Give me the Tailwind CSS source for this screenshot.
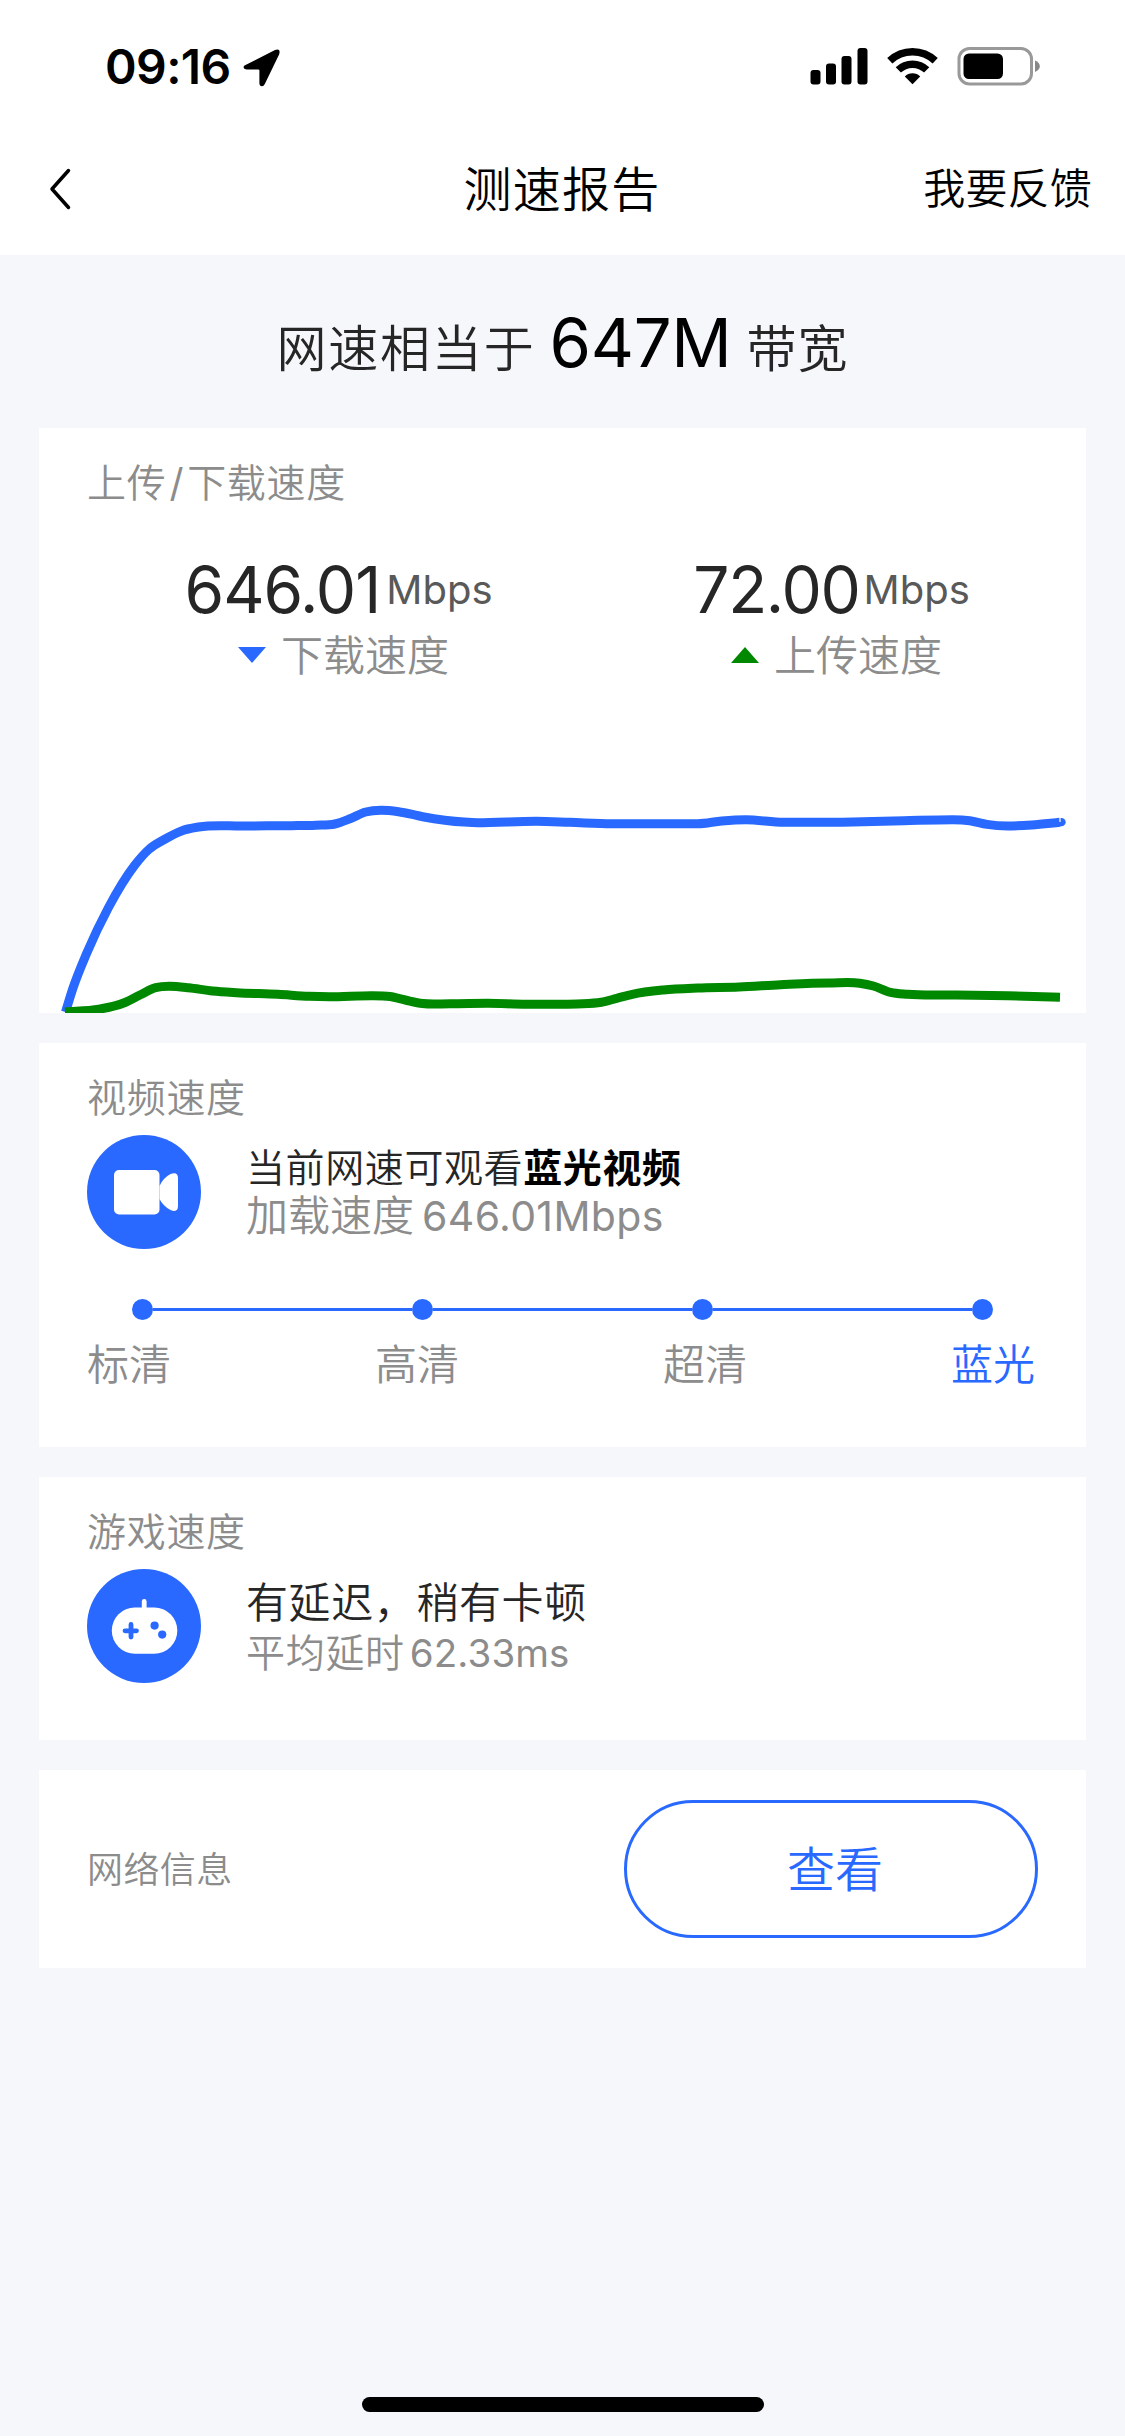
<!DOCTYPE html>
<html lang="zh-CN">
<head>
<meta charset="utf-8">
<title>测速报告</title>
<script src="https://cdn.jsdelivr.net/npm/@tailwindcss/browser@4"></script>
</head>
<body class="w-[1125px] h-[2436px] overflow-hidden bg-[#f5f7fb] font-['Noto_Sans_CJK_SC',sans-serif] font-[350] text-[#262626] flex flex-col">

<header class="bg-white h-[255px] flex-none">
  <div class="h-[132px] flex justify-between pl-[105px] pr-[84px]">
    <div class="flex pt-[37px] gap-[12px]">
      <span class="font-['Inter',sans-serif] font-semibold text-[48px] leading-[60px] tracking-[-0.6px] text-black w-[126px] whitespace-nowrap">09:16</span>
      <svg class="mt-[11px] w-[38px] h-[39px]" viewBox="0 0 38 39"><path d="M2 17.2 L32 2 Q38 0 36.200 6.200 L21.800 36 Q20.600 38.600 18.600 38.300 Q16.400 38 16.400 35.500 V22.500 Q16.400 21.500 15.400 21.500 H4 Q1 21.500 .6 19.500 Q.4 18 2 17.200Z"/></svg>
    </div>
    <svg class="mt-[46px] w-[231px] h-[40px]" viewBox="0 0 231 40">
      <rect x="0.500" y="24" width="10" height="14.500" rx="3"/>
      <rect x="16" y="17.500" width="10" height="21" rx="3"/>
      <rect x="31.500" y="10" width="10" height="28.500" rx="3"/>
      <rect x="47.500" y="2" width="10" height="36.500" rx="3"/>
      <g fill="none" stroke="#000" stroke-width="7.500">
        <path d="M79.800 14.800 A33 33 0 0 1 125.200 14.800"/>
        <path d="M88.300 23.900 A20.500 20.500 0 0 1 116.700 23.900"/>
      </g>
      <path d="M94.800 30.500 A11 11 0 0 1 110.200 30.500 L102.500 38.300Z"/>
      <rect x="149" y="2.500" width="72.500" height="35.500" rx="10.500" fill="none" stroke="#999" stroke-width="3"/>
      <rect x="153.500" y="7.500" width="39.500" height="25.500" rx="5.500"/>
      <path d="M225 14.500 Q229.800 16.500 229.800 20.300 Q229.800 24 225 26Z" fill="#888"/>
    </svg>
  </div>
  <div class="h-[120px] grid grid-cols-[1fr_auto_1fr] items-center pl-[48px] pr-[33px] text-black">
    <svg class="w-[24px] h-[44px] -mt-[7px]" viewBox="0 0 24 44" fill="none" stroke="#000" stroke-width="3.500" stroke-linecap="round" stroke-linejoin="round"><path d="M20.500 3.500 L4 22 L20.500 40.500"/></svg>
    <h1 class="text-[48px] leading-[60px] tracking-[1.3px] -mt-[12px] -translate-x-[8px]">测速报告</h1>
    <span class="justify-self-end text-[42px] leading-[60px] tracking-[0.2px] -mt-[12px]">我要反馈</span>
  </div>
</header>

<main class="px-[39px] flex flex-col">
  <div class="h-[173px] flex justify-center items-baseline pt-[48px] text-[50px] leading-[80px] tracking-[1.800px]">
    <span>网速相当于</span>
    <span class="font-['Inter',sans-serif] font-normal text-[67px] tracking-[-0.300px] text-black ml-[14px] mr-[15px]">647M</span>
    <span class="tracking-[1px]">带宽</span>
  </div>

  <section class="bg-white h-[585px] flex flex-col overflow-hidden">
    <h2 class="pl-[48px] mt-[28px] h-[48px] text-[39px] leading-[48px] tracking-[0.700px] text-[#8c8c8c]">上传<span class="mx-[3px] font-['Inter',sans-serif] font-normal">/</span>下载速度</h2>
    <div class="flex mt-[51px] pl-[53px]">
      <div class="w-[493px] flex flex-col items-center">
        <div class="flex items-center font-['Inter',sans-serif] font-normal leading-[70px]"><span class="text-[64px] tracking-[-1px]">646.01</span><span class="ml-[6px] text-[40px] text-[#595959]">Mbps</span></div>
        <div class="ml-[10px] flex items-center gap-[15px] text-[42px] leading-[56px] text-[#8c8c8c]"><svg class="mt-[4px] w-[28px] h-[16px]" viewBox="0 0 28 16"><path d="M0 0H28L14 16Z" fill="#2969ff"/></svg>下载速度</div>
      </div>
      <div class="w-[493px] flex flex-col items-center">
        <div class="flex items-center font-['Inter',sans-serif] font-normal leading-[70px]"><span class="text-[64px] tracking-[-1.300px]">72.00</span><span class="ml-[4px] text-[40px] text-[#595959]">Mbps</span></div>
        <div class="ml-[10px] flex items-center gap-[15px] text-[42px] leading-[56px] text-[#8c8c8c]"><svg class="mt-[4px] w-[28px] h-[16px]" viewBox="0 0 28 16"><path d="M0 16H28L14 0Z" fill="#080"/></svg>上传速度</div>
      </div>
    </div>
    <svg class="mt-auto w-[1047px] h-[233px] flex-none" viewBox="39 780 1047 233" fill="none" stroke-width="9">
      <path id="down" stroke="#2969ff"/>
      <path d="M1059.500 818 H1061.500 A4 4 0 0 1 1061.500 826.300 H1059.500Z" fill="#2969ff"/>
      <path d="M1060 818 V822" stroke="#fff" stroke-width="1.200"/>
      <path id="up" stroke="#080"/>
    </svg>
  </section>

  <section class="bg-white h-[404px] mt-[30px] px-[48px]">
    <h2 class="pt-[28px] h-[92px] text-[39px] leading-[48px] tracking-[0.700px] text-[#8c8c8c]">视频速度</h2>
    <div class="flex gap-[45px]">
      <svg class="w-[114px] h-[114px]" viewBox="0 0 114 114"><circle cx="57" cy="57" r="57" fill="#2969ff"/><rect x="27" y="35" width="45.500" height="44.500" rx="5" fill="#fff"/><path d="M72.500 51 Q76 43 83.500 39 Q91 36.500 91 43 V71 Q91 78 83.500 75 Q76 71 72.500 64Z" fill="#fff"/></svg>
      <div class="pt-[6px]">
        <p class="text-[39px] leading-[48px] tracking-[0.600px]">当前网速可观看<b class="font-bold text-black">蓝光视频</b></p>
        <p class="flex items-baseline text-[42px] leading-[48px] text-[#8c8c8c]">加载速度<span class="ml-[8px] font-['Inter',sans-serif] font-normal text-[41px] tracking-[0.350px]">646.01Mbps</span></p>
      </div>
    </div>
    <div class="mt-[50px] ml-[45px] w-[861px] h-[21px] flex items-center">
      <i class="size-[21px] rounded-full bg-[#2969ff]"></i><i class="h-[3px] flex-1 bg-[#2969ff]"></i>
      <i class="size-[21px] rounded-full bg-[#2969ff]"></i><i class="h-[3px] flex-1 bg-[#2969ff]"></i>
      <i class="size-[21px] rounded-full bg-[#2969ff]"></i><i class="h-[3px] flex-1 bg-[#2969ff]"></i>
      <i class="size-[21px] rounded-full bg-[#2969ff]"></i>
    </div>
    <div class="mt-[12px] flex justify-between w-[948px] text-[42px] leading-[60px] text-[#8c8c8c]">
      <span>标清</span><span>高清</span><span>超清</span><span class="text-[#2969ff]">蓝光</span>
    </div>
  </section>

  <section class="bg-white h-[263px] mt-[30px] px-[48px]">
    <h2 class="pt-[28px] h-[92px] text-[39px] leading-[48px] tracking-[0.700px] text-[#8c8c8c]">游戏速度</h2>
    <div class="flex gap-[45px]">
      <svg class="w-[114px] h-[114px]" viewBox="0 0 114 114"><circle cx="57" cy="57" r="57" fill="#2969ff"/><rect x="24.800" y="38.500" width="65.500" height="46.300" rx="23" fill="#fff"/><path d="M57.200 41 V32.500" stroke="#fff" stroke-width="4.800" stroke-linecap="round"/><path d="M38 61.800 H49.500 M44 55.500 V68" stroke="#2969ff" stroke-width="4.800" stroke-linecap="round"/><circle cx="67.600" cy="56.600" r="4.100" fill="#2969ff"/><circle cx="75.200" cy="65.600" r="4.100" fill="#2969ff"/></svg>
      <div class="pt-[6px]">
        <p class="text-[42px] leading-[50px] tracking-[0.600px]">有延迟，稍有卡顿</p>
        <p class="flex items-baseline text-[39px] leading-[50px] tracking-[0.700px] text-[#8c8c8c]">平均延时<span class="ml-[5px] font-['Inter',sans-serif] font-normal text-[38.5px] tracking-[0.100px]">62.33ms</span></p>
      </div>
    </div>
  </section>

  <section class="bg-white h-[198px] mt-[30px] px-[48px] flex items-center justify-between">
    <h2 class="pb-[4px] text-[36px] leading-[48px] tracking-[0.400px] text-[#8c8c8c]">网络信息</h2>
    <button class="w-[414px] h-[138px] rounded-full border-[3px] border-[#2969ff] text-[#2969ff] text-[48px] pl-[8px] pb-[6px]">查看</button>
  </section>
</main>

<footer class="mt-auto h-[39px] flex justify-center"><div class="w-[402px] h-[15px] rounded-full bg-black"></div></footer>

<script>
const series = {
  down: [[65.500,1012],[73,988],[86.800,953],[108.500,907.500],[134.500,865.500],[148.800,849.500],[164.300,839.500],[181.500,830.900],[198.700,827],[243.500,826],[291.700,825.700],[315.800,825.200],[334.800,824],[350,818.800],[365.700,812],[381,810.300],[398.500,811.700],[422.600,816.700],[464,822.100],[477.700,822.700],[536,821.300],[570,822.300],[611.700,823.700],[697.700,823.700],[721.800,820.900],[746,819.700],[783.800,822.300],[852.700,822],[904,820.700],[952.600,819.700],[969.800,820.700],[987,824.400],[1007.700,826],[1031.800,824.900],[1060,822.200]],
  up: [[65,1012],[98.900,1009.300],[123,1003.300],[140,995],[155.700,987.700],[169.500,986.300],[188.400,987.700],[212.500,991],[236.600,992.700],[278,994.300],[309,996.300],[329.600,996.700],[371,995.700],[389.900,996.500],[405.300,1000],[422.600,1003.500],[450,1003.700],[488,1003.300],[526,1004.300],[560,1004.300],[577,1003.900],[601.300,1002.300],[616.800,998.300],[632.300,994.300],[663.300,990],[697.700,988],[739,987],[780.400,984.700],[828.600,983],[859.600,983.200],[873.400,986],[890.600,992.400],[907.800,994.300],[956,995],[1007.700,995.700],[1060,997.300]]
};
// Cubic Hermite curve whose slopes are weighted by the neighbouring segments
function smooth(p) {
  const n = p.length, d = [], m = [];
  for (let i = 0; i < n - 1; i++) d.push((p[i+1][1] - p[i][1]) / (p[i+1][0] - p[i][0]));
  m[0] = d[0]; m[n-1] = d[n-2];
  for (let i = 1; i < n - 1; i++) {
    const a = p[i][0] - p[i-1][0], b = p[i+1][0] - p[i][0];
    m[i] = d[i-1] * d[i] <= 0 ? 0 : (d[i-1] * b + d[i] * a) / (a + b);
  }
  let s = `M${p[0]}`;
  for (let i = 0; i < n - 1; i++) {
    const h = (p[i+1][0] - p[i][0]) / 3;
    s += `C${p[i][0]+h} ${p[i][1]+m[i]*h} ${p[i+1][0]-h} ${p[i+1][1]-m[i+1]*h} ${p[i+1]}`;
  }
  return s;
}
for (const k in series) document.getElementById(k).setAttribute('d', smooth(series[k]));
</script>
</body>
</html>
